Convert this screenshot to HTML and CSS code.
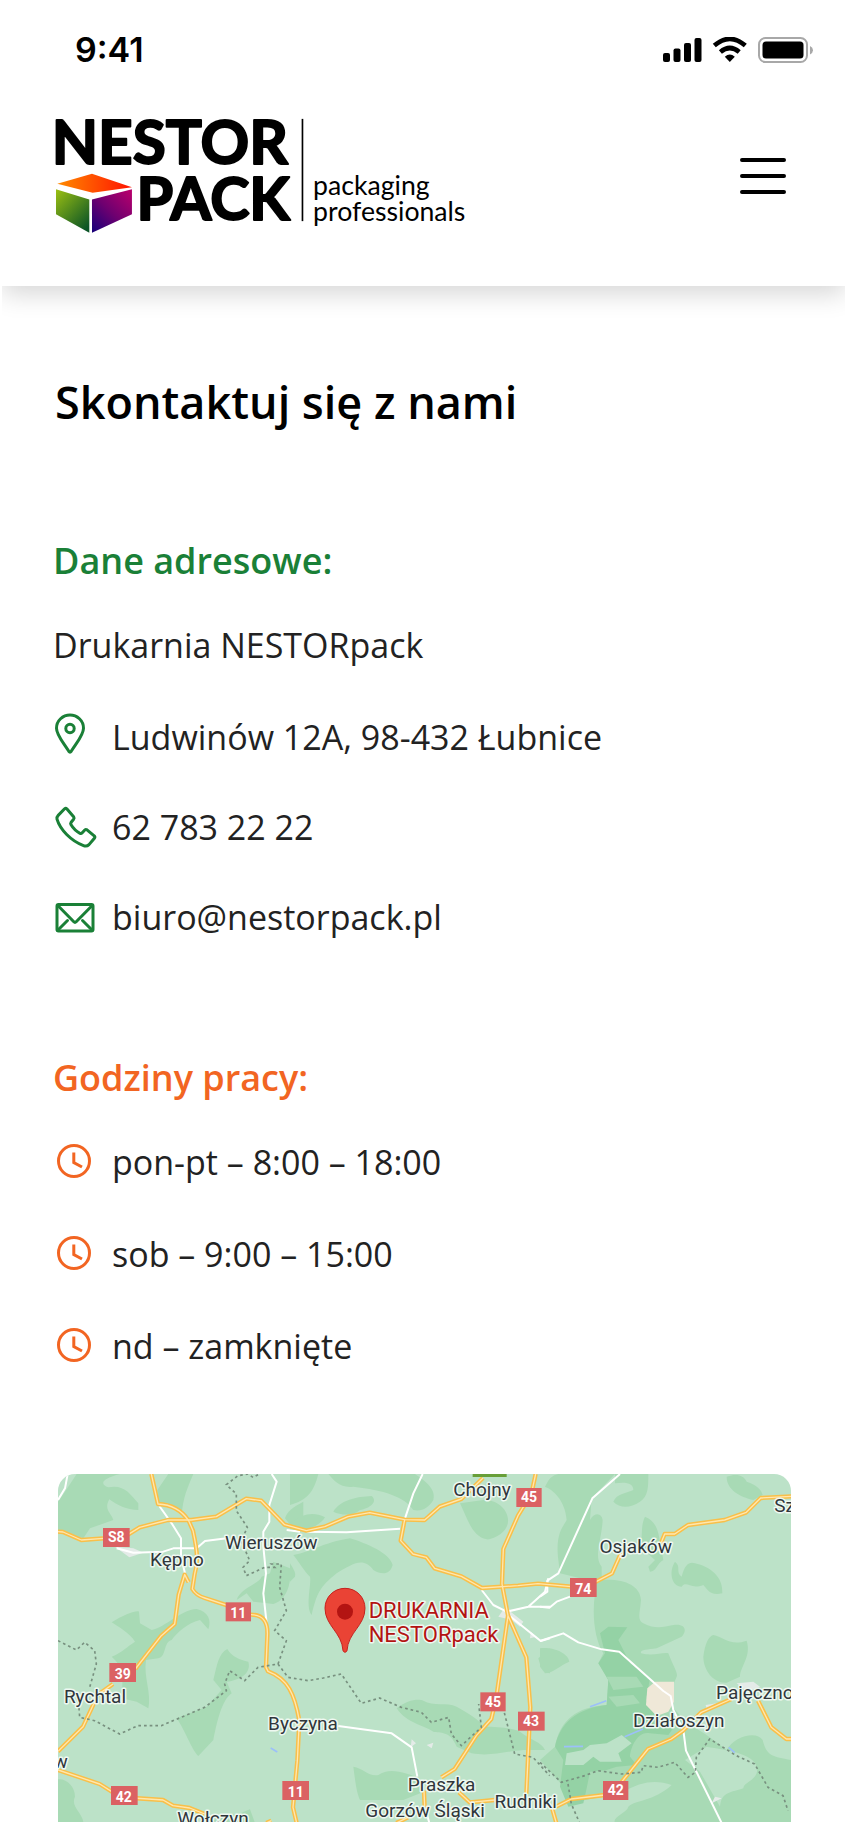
FILE: index.html
```html
<!DOCTYPE html>
<html lang="pl">
<head>
<meta charset="utf-8">
<meta name="viewport" content="width=device-width, initial-scale=1">
<title>Kontakt – NESTORpack</title>
<link rel="stylesheet" href="styles.css">
</head>
<body>
<header class="header">
  <div class="status">
    <span class="status-time">9:41</span>
    <svg class="status-icons" viewBox="0 0 150 26" aria-hidden="true">
      <rect x="0" y="16" width="7" height="9" rx="2"/>
      <rect x="10.500" y="11.500" width="7" height="13.500" rx="2"/>
      <rect x="21" y="6" width="7" height="19" rx="2"/>
      <rect x="31.500" y="1" width="7" height="24" rx="2"/>
      <g fill="none" stroke="#000" stroke-width="4.600">
        <path d="M51.300 8.600Q66.800-4.800 82.300 8.600"/>
        <path d="M57.400 15Q66.800 7 76.200 15"/>
      </g>
      <path d="M61.800 19.800Q66.800 15.400 71.800 19.800L66.800 25Z"/>
      <rect x="96" y="1" width="48" height="24" rx="6.500" fill="none" stroke="#a8a8a8" stroke-width="2"/>
      <rect x="99.500" y="4.500" width="41" height="17" rx="3.500"/>
      <path d="M147 9Q150 10.500 150 13.200T147 17.500Z" fill="#a8a8a8"/>
    </svg>
  </div>
  <div class="bar">
    <a class="logo" href="#" aria-label="NESTORpack packaging professionals">
      <svg class="logo-art" viewBox="165 350 1240 350">
        <defs>
          <linearGradient id="top" x1="0" x2="1" y1="0" y2="0"><stop offset="0" stop-color="#ff8a00"/><stop offset="1" stop-color="#ff1200"/></linearGradient>
          <linearGradient id="left" x1="0" y1="0" x2=".8" y2="1"><stop offset="0" stop-color="#9cc012"/><stop offset="1" stop-color="#0a5426"/></linearGradient>
          <linearGradient id="right" x1=".9" y1="0" x2="0" y2="1"><stop offset="0" stop-color="#b5006c"/><stop offset=".5" stop-color="#6e0070"/><stop offset="1" stop-color="#15007a"/></linearGradient>
        </defs>
        <text class="logo-name logo-nestor" x="155" y="491">NESTOR</text>
        <text class="logo-name" x="410" y="659">PACK</text>
        <path fill="url(#top)" d="M172 550L276 520 396 560 278 577Z"/>
        <path fill="url(#left)" d="M168 566L268 597V697L168 641Z"/>
        <path fill="url(#right)" d="M276 597L396 566V641L276 697Z"/>
        <path stroke="#000" stroke-width="5" d="M908 355V662"/>
        <text class="logo-tag" x="940" y="585">packaging</text>
        <text class="logo-tag" x="940" y="661">professionals</text>
      </svg>
    </a>
    <button class="menu" type="button" aria-label="Menu">
      <svg class="menu-icon" viewBox="0 0 46 36" aria-hidden="true"><path d="M2 2H44M2 18H44M2 34H44"/></svg>
    </button>
  </div>
</header>

<main class="page">
  <h1 class="title">Skontaktuj się z nami</h1>

  <section class="section">
    <h2 class="heading heading-green">Dane adresowe:</h2>
    <p class="company">Drukarnia NESTORpack</p>
    <ul class="list list-contact">
      <li class="row">
        <svg class="icon icon-green" viewBox="0 3 42 42" aria-hidden="true"><path d="M15 2C22.200 2 28.500 7.700 28.500 15.200 28.500 22 22 29 16.200 38.300Q15 40 13.800 38.300C8 29 1.500 22 1.500 15.200 1.500 7.700 7.800 2 15 2Z"/><circle cx="15" cy="15.500" r="4.200"/></svg>
        <span>Ludwinów 12A, 98-432 Łubnice</span>
      </li>
      <li class="row">
        <svg class="icon icon-green" viewBox="0 0 42 42" aria-hidden="true"><path d="M9.600 2.800Q10.800 1.800 12 3L18.800 11Q19.500 12 18.600 13.200L16 16.500Q15.300 17.500 15.900 18.600 19.500 24.600 25 27.300 26.200 27.800 27 27L29.800 24Q30.800 23 32 23.800L39.200 29.800Q40.400 31 39.400 32.200L34 38.600Q31.700 40.800 28.500 39.600C16 35 5 23.500 2 13.200Q1.600 11 3.200 9.400Z"/></svg>
        <a class="link" href="tel:627832222">62 783 22 22</a>
      </li>
      <li class="row">
        <svg class="icon icon-green" viewBox="0 0 42 42" aria-hidden="true"><rect x="2" y="8.500" width="36" height="26.500" rx="1.500"/><path d="M2.800 9.500L18.800 25.800Q20 27 21.200 25.800L37.200 9.500M3 34L12.500 24.500M37 34L27.500 24.500"/></svg>
        <a class="link" href="mailto:biuro@nestorpack.pl">biuro@nestorpack.pl</a>
      </li>
    </ul>
  </section>

  <section class="section">
    <h2 class="heading heading-orange">Godziny pracy:</h2>
    <ul class="list list-hours">
      <li class="row">
        <svg class="icon icon-orange" viewBox="0 -1 42 42" aria-hidden="true"><circle cx="19" cy="19" r="15.500"/><path class="hands" d="M18.800 10.500V20.500L27 25"/></svg>
        <span>pon-pt – 8:00 – 18:00</span>
      </li>
      <li class="row">
        <svg class="icon icon-orange" viewBox="0 -1 42 42" aria-hidden="true"><circle cx="19" cy="19" r="15.500"/><path class="hands" d="M18.800 10.500V20.500L27 25"/></svg>
        <span>sob – 9:00 – 15:00</span>
      </li>
      <li class="row">
        <svg class="icon icon-orange" viewBox="0 -1 42 42" aria-hidden="true"><circle cx="19" cy="19" r="15.500"/><path class="hands" d="M18.800 10.500V20.500L27 25"/></svg>
        <span>nd – zamknięte</span>
      </li>
    </ul>
  </section>

  <svg class="map" viewBox="0 0 2199 1044" role="img" aria-label="Mapa dojazdu">
    <!-- forests -->
    <g class="forest">
      <g transform="translate(-54 -42)">
        <path d="M54 125L75 95 110 42H240C190 55 175 70 205 82 250 72 270 100 295 130V150C260 150 230 135 208 118 190 150 215 160 220 180L150 205 130 235 54 210Z"/>
        <path d="M385 42H460C440 90 430 110 425 165L395 140 355 125 352 90Z"/>
        <path d="M215 487C250 465 290 450 297 455L300 490 335 510C380 500 420 450 470 447 505 455 515 480 505 508L480 480C440 490 410 520 395 540 370 545 380 590 355 595L318 600C310 650 335 700 325 745L290 725 245 715C250 650 250 620 215 590 250 575 260 560 285 545 270 520 235 500 215 487Z"/>
        <path d="M562 567C575 590 600 600 625 605 635 640 600 660 560 665L575 700C545 720 530 790 520 840L475 888C455 870 435 810 410 775L500 740 545 690 520 660C530 620 535 580 562 567Z"/>
        <path d="M590 420C600 385 660 370 665 350L690 340 700 305 750 325C755 370 740 420 700 432L640 425 620 400Z"/>
        <path d="M54 958C80 955 105 980 105 1010 90 1040 130 1060 130 1089H54Z"/>
        <path d="M510 1089C530 1070 560 1075 570 1060 590 1070 610 1055 630 1048L645 1089Z"/>
        <path d="M790 125C760 140 740 155 735 175L755 200H790Z"/>
      </g>
      <g transform="translate(696 -42)">
        <path d="M0 42H85C70 100 50 120 0 135Z"/>
        <path d="M115 42H375C400 60 440 85 430 120 415 145 395 155 370 150 345 110 280 90 190 80 150 85 130 60 115 42Z"/>
        <path d="M130 155C150 120 200 110 245 108 265 125 240 145 210 150 190 170 150 165 130 155Z"/>
        <path d="M0 190C40 160 70 155 105 172 90 200 40 215 0 215Z"/>
        <path d="M10 285C70 275 90 250 180 235 230 250 300 280 308 315 300 345 275 345 250 330 220 290 190 310 140 340 90 380 80 400 65 465 45 440 65 370 60 350 40 330 30 310 10 285Z"/>
        <path d="M0 310Q20 340 15 350L0 365Z"/>
        <path d="M510 130L580 120C640 120 665 170 650 200 640 225 600 240 590 238 545 230 530 170 510 130Z"/>
        <path d="M320 745C350 720 385 715 400 722 430 740 470 725 500 740 535 760 570 780 580 800 630 800 670 805 690 815 720 840 755 845 765 870L700 870C640 875 600 890 545 880L500 860C480 810 450 820 430 815 400 795 350 790 320 745Z"/>
        <path d="M190 920C220 925 235 950 265 945 300 920 350 940 390 955V1000L340 1020H210C200 1000 195 960 190 920Z"/>
        <path d="M745 595L780 565V640Q755 640 745 595Z"/>
      </g>
      <g transform="translate(1446 -42)">
        <path d="M15 80Q30 45 55 42H225L155 115 150 180C165 155 185 160 188 180 185 240 160 290 185 320L185 360C250 355 300 375 303 420 300 460 290 480 310 490 350 510 370 500 400 495 440 490 440 515 425 530L350 565C320 570 300 568 303 580 340 590 370 575 385 580 400 620 415 640 410 650L380 720 440 790C500 820 530 850 560 870 580 830 650 810 668 840 680 890 700 890 753 900V1089H225C215 1070 260 1060 265 1040 285 1020 340 1025 395 975 350 960 310 960 240 1000L110 1025 0 900 45 860C60 780 110 740 200 735L205 660 175 610 190 580C165 540 155 470 165 400L120 355 60 340 55 300C45 220 70 200 80 180 75 120 40 90 15 80Z"/>
        <path fill="#bce2c8" d="M500 860C560 870 640 880 650 920 660 960 610 965 610 985 560 1000 545 1000 540 1040L480 935 435 900Z"/>
        <path d="M225 42H325C325 80 325 110 300 125 270 145 240 145 220 125 230 100 260 100 280 90 280 70 260 65 225 70Z"/>
        <path d="M560 50C590 40 610 45 620 65 650 75 665 90 668 105L640 120C600 110 560 90 560 50Z"/>
        <path d="M315 170C340 180 350 200 355 220L370 300C350 310 350 335 330 335L325 320 345 300 300 260C310 230 300 200 315 170Z"/>
        <path d="M405 305C425 320 405 335 425 350 435 310 450 305 465 310 510 320 550 350 547 400 510 410 500 385 490 375 450 390 440 360 425 380 395 380 385 335 405 305Z"/>
        <path d="M520 525C550 530 570 560 620 542 635 590 600 620 600 650L560 668C520 670 490 630 490 590 495 550 505 530 520 525Z"/>
        <path d="M0 565C40 560 85 580 88 605 60 615 40 640 15 640L0 620Z"/>
      </g>
    </g>
    <g class="forest-deep" transform="translate(1446 -42)">
      <path d="M180 520L205 500 262 502 235 540 250 570 270 610 330 655 318 720 345 765 410 790 385 825 330 820C290 810 270 870 270 890L290 915 230 920 200 930 150 935 140 985 130 1030 85 1040 60 980 70 900 45 860C60 790 110 745 200 735L205 660 175 610 195 580Z"/>
      <path fill="#a8dab5" d="M200 650L290 650 310 680 220 690ZM205 710L280 705 300 730 230 740Z"/>
      <path fill="#bce2c8" d="M80 880L130 870 150 855 200 850 245 825 275 850 235 880 245 905 180 905 160 890 130 915 75 915Z"/>
    </g>
    <path fill="#efe8d8" transform="translate(1446 -42)" d="M345 665H402V725L385 755 350 768 318 735 322 685Z"/>
    <g class="settlement">
      <path transform="translate(-54 -42)" d="M225 260L280 265 310 278 268 292Z"/>
      <path transform="translate(696 -42)" d="M650 435L662 455 700 485 690 500 665 480 625 470ZM722 515L740 530 720 535ZM365 838L378 850 362 862ZM410 855L430 848 425 865Z"/>
      <path transform="translate(1446 -42)" d="M590 670L640 665 660 680 620 695ZM497 735L530 730 500 748ZM525 1010L545 1015 515 1030Z"/>
    </g>
    <!-- minor roads -->
    <g class="minor">
      <g transform="translate(-54 -42)">
        <path d="M54 120L75 85 83 42M358 138L395 190 423 235V290L435 340M230 265L280 278 370 275 400 265H470L495 243 560 235M695 42L710 65 688 135V185L670 215V260L678 340 670 400 680 490M740 210L780 215"/>
      </g>
      <g transform="translate(696 -42)">
        <path d="M398 42L370 100 345 175M50 215L170 217 330 206M145 798L305 820 365 862 382 950M410 1060L418 1089M575 390L610 435 650 455 715 440 765 395 775 355M715 440H780M662 470L752 543 780 535"/>
      </g>
      <g transform="translate(1446 -42)">
        <path d="M240 42L157 115 55 340 22 362V395L0 410M0 440L28 443 50 425 90 410M0 543L70 520 115 547 185 568 238 575 370 693 392 708 400 750 430 810 438 872 545 1089"/>
      </g>
    </g>
    <!-- main roads: casing and centre line -->
    <defs>
      <g id="roads">
        <path d="M0 173L15 174 70 198 137 193M205 185L245 160 330 138H400L475 128 565 74 610 80 680 152 745 170 800 158 870 128 935 116 1040 137 1100 138 1145 98 1210 75 1275 12"/>
        <path d="M280 0L300 90C350 92 375 115 392 140L405 170C420 240 420 265 410 300L403 345Q415 365 440 372L510 395M575 422C620 420 630 450 628 485L624 580 630 592C690 615 710 660 724 740L718 860 705 1000 716 1047"/>
        <path d="M392 325L380 302 362 362 350 450 310 485 232 585M165 630L120 662 75 758 0 832M0 888L125 930 165 955M225 972L315 978 345 995 395 1002 440 1020M625 1047L640 1040"/>
        <path d="M1040 137L1028 200 1065 240 1105 250 1130 283 1210 307 1272 342 1380 335 1440 329 1540 338M1610 325L1662 298 1690 235M1800 230L1820 180H1850L1890 153 2000 138 2065 115 2108 72 2199 67"/>
        <path d="M1433 0L1420 60 1380 125 1336 225 1332 330 1350 425 1315 670 1300 735 1255 785 1190 885 1150 910M1350 425L1405 550 1417 700 1410 850 1405 960M1203 955L1235 985 1310 978M1098 950L1100 1000M1015 1047L1050 1030"/>
        <path d="M1490 1000L1540 975 1640 963M1690 925L1770 825 1840 795 1875 770 1930 715 2020 675M2100 680L2140 760 2185 795H2199M1480 995L1495 1047"/>
      </g>
    </defs>
    <use href="#roads" class="road-case"/>
    <use href="#roads" class="road-mid"/>
    <!-- borders -->
    <g class="border">
      <path d="M600 2L585 10 570 0 540 5 505 32 535 60V110L568 160 550 200 575 260 555 280 565 305 620 280H650L640 270 670 270 665 340 685 410 650 470 685 500 660 570 600 580 560 620 515 590 500 630 505 650 440 700 310 755 240 755 185 780 110 740 65 730 62 690M0 500L55 528 80 505 110 530 115 570 95 640M660 570L690 610 750 620 796 612 850 600 910 688 965 672 1030 700 1090 715 1120 745 1172 730 1180 780 1210 815 1270 760 1262 690M1335 700L1370 840 1425 850 1475 905M1446 865L1510 925 1580 905 1620 890 1690 900 1750 895 1755 875 1800 880 1850 865 1890 910 1912 895 1915 850 1955 795 2035 845 2090 870 2130 940 2175 965 2190 1010M1530 930L1540 990 1565 1047"/>
    </g>
    <g class="water"><path d="M1596 698L1645 680M1518 818L1575 817M1700 788L1755 765M2012 820L2030 836M638 822L658 834"/></g>
    <rect x="1244" y="0" width="102" height="9" fill="#689f38"/>
    <!-- road numbers -->
    <g class="shield">
      <rect x="135" y="162" width="80" height="57"/><rect x="503" y="385" width="76" height="57"/>
      <rect x="154" y="567" width="80" height="57"/><rect x="159" y="936" width="80" height="57"/>
      <rect x="673" y="921" width="80" height="57"/><rect x="1375" y="42" width="76" height="57"/>
      <rect x="1536" y="312" width="80" height="57"/><rect x="1267" y="655" width="76" height="57"/>
      <rect x="1380" y="713" width="80" height="57"/><rect x="1635" y="921" width="76" height="57"/>
    </g>
    <g class="shield-text">
      <text x="175" y="205">S8</text><text x="541" y="433">11</text><text x="194" y="615">39</text>
      <text x="197" y="984">42</text><text x="713" y="969">11</text><text x="1413" y="85">45</text>
      <text x="1576" y="360">74</text><text x="1305" y="698">45</text><text x="1419" y="755">43</text>
      <text x="1673" y="964">42</text>
    </g>
    <g class="place">
      <text x="357" y="277">Kępno</text><text x="640" y="224">Wieruszów</text><text x="111" y="687">Rychtal</text>
      <text x="8" y="882">w</text><text x="465" y="1052">Wołczyn</text><text x="735" y="768">Byczyna</text>
      <text x="1272" y="67">Chojny</text><text x="1733" y="238">Osjaków</text>
      <text x="1862" y="760">Działoszyn</text><text x="1151" y="950">Praszka</text>
      <text x="1101" y="1029">Gorzów Śląski</text><text x="1403" y="1002">Rudniki</text>
      <text class="from-left" x="2149" y="114">Sz</text><text class="from-left" x="1974" y="676">Pajęczno</text>
    </g>
    <g class="pin-label"><text x="932" y="432">DRUKARNIA</text><text x="932" y="504">NESTORpack</text></g>
    <path d="M861 343C895 343 921 370 921 403 921 455 870 475 867 530 865 536 857 536 855 530 852 475 801 455 801 403 801 370 827 343 861 343Z" fill="#ea4335" stroke="#c5221f" stroke-width="3"/>
    <circle cx="861" cy="413" r="24" fill="#b31412"/>
  </svg>
</main>
</body>
</html>
```
FILE: styles.css
```css
* { box-sizing: border-box; }
body {
  margin: 0;
  background: #fff;
  color: #222;
  font-family: "Open Sans", "Noto Sans", sans-serif;
  font-size: 34px;
  line-height: 46px;
}
.header {
  margin: 0 2px;
  padding-bottom: 52px;
  background: #fff;
  box-shadow: 0 8px 24px rgba(0, 0, 0, .16);
  clip-path: inset(0 0 -40px 0);
}
.status {
  display: flex;
  justify-content: space-between;
  align-items: center;
  padding: 30px 32px 0 73px;
}
.status-time {
  color: #000;
  font: 600 34px/40px Inter, sans-serif;
}
.status-icons { width: 150px; height: 26px; }
.bar {
  display: flex;
  justify-content: space-between;
  align-items: center;
  padding: 47px 59px 0 53px;
}
.logo { display: block; }
.logo-art { display: block; width: 413px; height: 117px; overflow: visible; }
.logo-name {
  font: 700 178px Lato, sans-serif;
  stroke: #000;
  stroke-width: 6;
  stroke-linejoin: round;
}
.logo-nestor { font-size: 181px; }
.logo-tag { font: 400 80px Lato, sans-serif; }
.menu { display: block; padding: 0; border: 0; background: none; }
.menu-icon {
  display: block;
  width: 46px;
  height: 36px;
  fill: none;
  stroke: #000;
  stroke-width: 4;
  stroke-linecap: round;
}
.page { padding: 85px 56px 0 53px; }
.title {
  margin: 0 0 103px 2px;
  color: #000;
  font-size: 45px;
  font-weight: 600;
  line-height: 62px;
}
.heading {
  margin: 0 0 37px;
  font-size: 36px;
  font-weight: 600;
  line-height: 49px;
}
.heading-green { color: #1a8037; }
.heading-orange { color: #f26522; }
.company { margin: 0 0 46px; }
.section { margin-bottom: 113px; }
.section + .section { margin-bottom: 105px; }
.list {
  display: flex;
  flex-direction: column;
  margin: 0;
  padding: 0;
  list-style: none;
}
.list-contact { gap: 44px; }
.list-hours { gap: 46px; }
.row { display: flex; gap: 15px; padding-left: 2px; }
.link { color: inherit; text-decoration: none; }
.icon {
  flex: none;
  width: 42px;
  height: 42px;
  margin-top: 2px;
  overflow: visible;
  fill: none;
  stroke-width: 3;
  stroke-linejoin: round;
  stroke-linecap: round;
}
.icon-green { stroke: #1a8037; }
.icon-orange { stroke: #f26522; }
.hands { stroke-linecap: butt; stroke-linejoin: miter; }
.map {
  display: block;
  width: calc(100% - 5px);
  margin-left: 5px;
  border-radius: 17px 17px 0 0;
  background: #bce2c8;
}
.forest { fill: #a8dab5; }
.forest-deep { fill: #94d2a5; }
.settlement { fill: #e4ebe8; }
.minor { fill: none; stroke: #fff; stroke-width: 6; stroke-linejoin: round; }
.road-case { fill: none; stroke: #f9bf49; stroke-width: 13; stroke-linejoin: round; }
.road-mid { fill: none; stroke: #ffe7ae; stroke-width: 4; stroke-linejoin: round; }
.border { fill: none; stroke: #78907f; stroke-width: 5; stroke-dasharray: 8 9; }
.water { fill: none; stroke: #9cc0f9; stroke-width: 5; }
.shield { fill: #db6163; }
.shield-text { fill: #fff; font: 700 42px Roboto, sans-serif; text-anchor: middle; }
.place {
  fill: #30363b;
  stroke: #eef8f1;
  stroke-width: 9;
  paint-order: stroke;
  stroke-linejoin: round;
  font: 400 57px Roboto, sans-serif;
  text-anchor: middle;
}
.from-left { text-anchor: start; }
.pin-label {
  fill: #b31412;
  stroke: #eef8f1;
  stroke-width: 9;
  paint-order: stroke;
  stroke-linejoin: round;
  font: 400 66px Roboto, sans-serif;
}
```
